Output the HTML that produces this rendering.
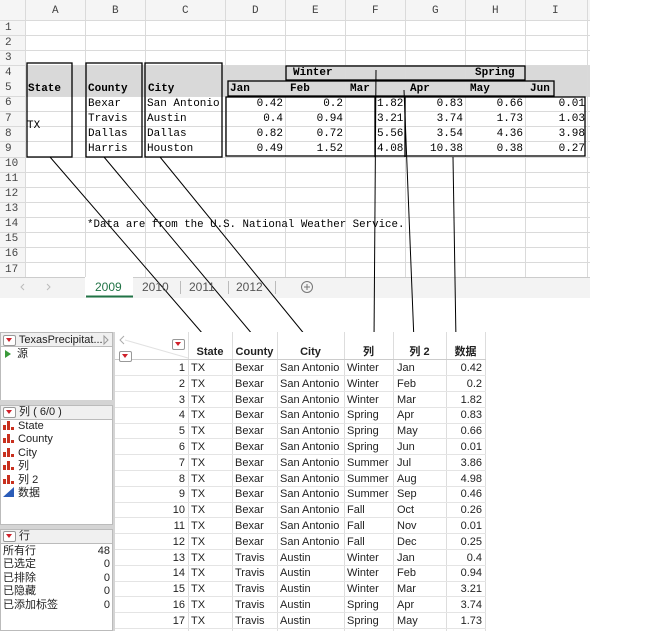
<!DOCTYPE html>
<html><head><meta charset="utf-8"><style>
body{margin:0;width:667px;height:631px;background:#fff;position:relative;overflow:hidden}
.a{position:absolute;white-space:nowrap}
.m{font-family:"Liberation Mono","Noto Sans CJK SC",monospace;font-size:11px;color:#000;line-height:14px}
.s{font-family:"Liberation Sans","Noto Sans CJK SC",sans-serif;font-size:11px;color:#222;line-height:14px}
.tri{display:inline-block;width:11px;height:9px;background:#fff;border:1px solid #999;border-radius:2px;position:relative;vertical-align:middle}
.tri:after{content:"";position:absolute;left:2px;top:2px;border-left:3.5px solid transparent;border-right:3.5px solid transparent;border-top:4px solid #d0202a}
.it{height:13.4px;line-height:13.4px}
.it svg{vertical-align:-1px}
</style></head><body>
<svg class="a" style="left:0;top:0" width="667" height="631">
<rect x="0" y="0" width="590" height="277" fill="#fff"/>
<rect x="0" y="0" width="590" height="20" fill="#f5f5f5"/>
<rect x="0" y="0" width="25" height="277" fill="#f5f5f5"/>
<rect x="25" y="65" width="565" height="31" fill="#d9d9d9"/>
<g stroke="#dadada" stroke-width="1">
<line x1="25.5" y1="0" x2="25.5" y2="277"/><line x1="85.5" y1="0" x2="85.5" y2="277"/><line x1="145.5" y1="0" x2="145.5" y2="277"/><line x1="225.5" y1="0" x2="225.5" y2="277"/><line x1="285.5" y1="0" x2="285.5" y2="277"/><line x1="345.5" y1="0" x2="345.5" y2="277"/><line x1="405.5" y1="0" x2="405.5" y2="277"/><line x1="465.5" y1="0" x2="465.5" y2="277"/><line x1="525.5" y1="0" x2="525.5" y2="277"/><line x1="587.5" y1="0" x2="587.5" y2="277"/>
<line x1="0" y1="20.5" x2="590" y2="20.5"/><line x1="0" y1="35.5" x2="590" y2="35.5"/><line x1="0" y1="50.5" x2="590" y2="50.5"/><line x1="0" y1="65.5" x2="590" y2="65.5"/><line x1="0" y1="96.5" x2="590" y2="96.5"/><line x1="0" y1="111.5" x2="590" y2="111.5"/><line x1="0" y1="126.5" x2="590" y2="126.5"/><line x1="0" y1="141.5" x2="590" y2="141.5"/><line x1="0" y1="157.5" x2="590" y2="157.5"/><line x1="0" y1="172.5" x2="590" y2="172.5"/><line x1="0" y1="187.5" x2="590" y2="187.5"/><line x1="0" y1="202.5" x2="590" y2="202.5"/><line x1="0" y1="217.5" x2="590" y2="217.5"/><line x1="0" y1="232.5" x2="590" y2="232.5"/><line x1="0" y1="247.5" x2="590" y2="247.5"/><line x1="0" y1="262.5" x2="590" y2="262.5"/>
</g>
<rect x="0" y="277" width="590" height="21" fill="#f3f3f3"/>
<line x1="0" y1="277.5" x2="590" y2="277.5" stroke="#ccc"/>
<rect x="85" y="277" width="48" height="20" fill="#fff"/>
<line x1="86" y1="296.5" x2="133" y2="296.5" stroke="#217346" stroke-width="2"/>
<g stroke="#bbb"><line x1="180.5" y1="281" x2="180.5" y2="294"/><line x1="228.5" y1="281" x2="228.5" y2="294"/><line x1="275.5" y1="281" x2="275.5" y2="294"/></g>
<circle cx="307" cy="287" r="5.5" fill="none" stroke="#777"/>
<path d="M304 287h6M307 284v6" stroke="#777"/>
<path d="M24 284l-3 3 3 3M47 284l3 3-3 3" fill="none" stroke="#bbb"/>
<g fill="none" stroke="#000" stroke-width="1.3">
<rect x="27" y="63" width="45" height="94"/>
<rect x="86" y="63" width="56" height="94"/>
<rect x="145" y="63" width="77" height="94"/>
<rect x="226" y="97" width="359" height="59"/>
<rect x="286" y="66" width="239" height="14"/>
<rect x="228" y="81" width="326" height="15"/>
<line x1="375" y1="97" x2="375" y2="157"/>
<line x1="405" y1="97" x2="405" y2="157"/>
</g>
<g stroke="#000" stroke-width="1">
<line x1="50" y1="157" x2="209" y2="341"/>
<line x1="104" y1="157" x2="258" y2="341"/>
<line x1="160" y1="157" x2="310" y2="341"/>
<line x1="376" y1="70" x2="374" y2="341"/>
<line x1="404" y1="90" x2="414" y2="341"/>
<line x1="453" y1="157" x2="456" y2="341"/>
</g>
<rect x="0" y="332" width="113" height="299" fill="#fff"/>
<rect x="0.5" y="332.5" width="112" height="14" fill="#f0f0f0" stroke="#bbb"/>
<rect x="0.5" y="346.5" width="112" height="54" fill="#fff" stroke="#bbb"/>
<rect x="0" y="400" width="113" height="5" fill="#d4d4d4"/>
<rect x="0.5" y="405.5" width="112" height="14" fill="#f0f0f0" stroke="#bbb"/>
<rect x="0.5" y="419.5" width="112" height="105" fill="#fff" stroke="#bbb"/>
<rect x="0" y="525" width="113" height="4" fill="#d4d4d4"/>
<rect x="0.5" y="529.5" width="112" height="14" fill="#f0f0f0" stroke="#bbb"/>
<rect x="0.5" y="543.5" width="112" height="87" fill="#fff" stroke="#bbb"/>
<rect x="113" y="332" width="2" height="299" fill="#d4d4d4"/>
<path d="M5 350l6 4-6 4z" fill="#3a9a3a"/>
<path d="M104 336l4 4-4 4z" fill="none" stroke="#999"/>
<rect x="115" y="332" width="371" height="28" fill="#fff"/>
<g stroke="#ddd">
<line x1="188.5" y1="332" x2="188.5" y2="631"/><line x1="232.5" y1="332" x2="232.5" y2="631"/><line x1="277.5" y1="332" x2="277.5" y2="631"/><line x1="344.5" y1="332" x2="344.5" y2="631"/><line x1="393.5" y1="332" x2="393.5" y2="631"/><line x1="446.5" y1="332" x2="446.5" y2="631"/><line x1="485.5" y1="332" x2="485.5" y2="631"/>
<line x1="115" y1="359.5" x2="486" y2="359.5" stroke="#ccc"/>
<line x1="125" y1="340" x2="188" y2="358" stroke="#e2e2e2"/>
</g>
<path d="M124 336l-4 4 4 4" fill="none" stroke="#aaa"/>
</svg>
<div class="a m" style="top:4px;left:52px;color:#444">A</div>
<div class="a m" style="top:4px;left:112px;color:#444">B</div>
<div class="a m" style="top:4px;left:182px;color:#444">C</div>
<div class="a m" style="top:4px;left:252px;color:#444">D</div>
<div class="a m" style="top:4px;left:312px;color:#444">E</div>
<div class="a m" style="top:4px;left:372px;color:#444">F</div>
<div class="a m" style="top:4px;left:432px;color:#444">G</div>
<div class="a m" style="top:4px;left:492px;color:#444">H</div>
<div class="a m" style="top:4px;left:552px;color:#444">I</div>
<div class="a m" style="top:21px;left:5px;line-height:15.1px;color:#444;white-space:pre">1
2
3
4
5
6
7
8
9
10
11
12
13
14
15
16
17</div>
<div class="a m" style="top:82px;left:28px;font-weight:bold">State</div>
<div class="a m" style="top:82px;left:88px;font-weight:bold">County</div>
<div class="a m" style="top:82px;left:148px;font-weight:bold">City</div>
<div class="a m" style="top:66px;left:293px;font-weight:bold">Winter</div>
<div class="a m" style="top:66px;left:475px;font-weight:bold">Spring</div>
<div class="a m" style="top:82px;left:230px;font-weight:bold">Jan</div>
<div class="a m" style="top:82px;left:290px;font-weight:bold">Feb</div>
<div class="a m" style="top:82px;left:350px;font-weight:bold">Mar</div>
<div class="a m" style="top:82px;left:410px;font-weight:bold">Apr</div>
<div class="a m" style="top:82px;left:470px;font-weight:bold">May</div>
<div class="a m" style="top:82px;left:530px;font-weight:bold">Jun</div>
<div class="a m" style="top:119px;left:27px">TX</div>
<div class="a m" style="top:97px;left:88px;line-height:15px;white-space:pre">Bexar
Travis
Dallas
Harris</div>
<div class="a m" style="top:97px;left:147px;line-height:15px;white-space:pre">San Antonio
Austin
Dallas
Houston</div>
<div class="a m" style="top:97px;left:226px;width:57px;text-align:right;line-height:15px;white-space:pre">0.42
0.4
0.82
0.49</div>
<div class="a m" style="top:97px;left:286px;width:57px;text-align:right;line-height:15px;white-space:pre">0.2
0.94
0.72
1.52</div>
<div class="a m" style="top:97px;left:377px;line-height:15px;white-space:pre">1.82
3.21
5.56
4.08</div>
<div class="a m" style="top:97px;left:406px;width:57px;text-align:right;line-height:15px;white-space:pre">0.83
3.74
3.54
10.38</div>
<div class="a m" style="top:97px;left:466px;width:57px;text-align:right;line-height:15px;white-space:pre">0.66
1.73
4.36
0.38</div>
<div class="a m" style="top:97px;left:526px;width:59px;text-align:right;line-height:15px;white-space:pre">0.01
1.03
3.98
0.27</div>
<div class="a m" style="top:218px;left:87px;font-size:10.8px">*Data are from the U.S. National Weather Service.</div>
<div class="a s" style="top:280px;left:95px;font-size:12px;color:#217346">2009</div>
<div class="a s" style="top:280px;left:142px;font-size:12px;color:#555">2010</div>
<div class="a s" style="top:280px;left:189px;font-size:12px;color:#555">2011</div>
<div class="a s" style="top:280px;left:236px;font-size:12px;color:#555">2012</div>
<div class="a s" style="top:333px;left:3px"><span class="tri"></span> TexasPrecipitat...</div>
<div class="a s" style="top:347px;left:17px">源</div>
<div class="a s" style="top:405px;left:3px"><span class="tri"></span> 列 ( 6/0 )</div>
<div class="a s" style="top:420px;left:3px">
<div class="it"><svg width="12" height="10"><rect x="0" y="5" width="3" height="5" fill="#c8301e"/><rect x="4" y="1" width="3" height="9" fill="#c8301e"/><rect x="8" y="7" width="3" height="3" fill="#c8301e"/></svg> State</div>
<div class="it"><svg width="12" height="10"><rect x="0" y="5" width="3" height="5" fill="#c8301e"/><rect x="4" y="1" width="3" height="9" fill="#c8301e"/><rect x="8" y="7" width="3" height="3" fill="#c8301e"/></svg> County</div>
<div class="it"><svg width="12" height="10"><rect x="0" y="5" width="3" height="5" fill="#c8301e"/><rect x="4" y="1" width="3" height="9" fill="#c8301e"/><rect x="8" y="7" width="3" height="3" fill="#c8301e"/></svg> City</div>
<div class="it"><svg width="12" height="10"><rect x="0" y="5" width="3" height="5" fill="#c8301e"/><rect x="4" y="1" width="3" height="9" fill="#c8301e"/><rect x="8" y="7" width="3" height="3" fill="#c8301e"/></svg> 列</div>
<div class="it"><svg width="12" height="10"><rect x="0" y="5" width="3" height="5" fill="#c8301e"/><rect x="4" y="1" width="3" height="9" fill="#c8301e"/><rect x="8" y="7" width="3" height="3" fill="#c8301e"/></svg> 列 2</div>
<div class="it"><svg width="12" height="10"><path d="M0 10L11 0V10Z" fill="#2a5cb8"/></svg> 数据</div>
</div>
<div class="a s" style="top:529px;left:3px"><span class="tri"></span> 行</div>
<div class="a s" style="top:545px;left:3px;line-height:13.4px;white-space:pre">所有行
已选定
已排除
已隐藏
已添加标签</div>
<div class="a s" style="top:545px;left:80px;width:30px;text-align:right;line-height:13.4px;white-space:pre">48
0
0
0
0</div>
<div class="a" style="top:335px;left:172px"><span class="tri"></span></div>
<div class="a" style="top:347px;left:119px"><span class="tri"></span></div>
<div class="a s" style="top:345px;left:188px;width:44px;text-align:center;font-weight:bold">State</div>
<div class="a s" style="top:345px;left:232px;width:45px;text-align:center;font-weight:bold">County</div>
<div class="a s" style="top:345px;left:277px;width:67px;text-align:center;font-weight:bold">City</div>
<div class="a s" style="top:345px;left:344px;width:49px;text-align:center;font-weight:bold">列</div>
<div class="a s" style="top:345px;left:393px;width:53px;text-align:center;font-weight:bold">列 2</div>
<div class="a s" style="top:345px;left:446px;width:39px;text-align:center;font-weight:bold">数据</div>
<div class="a" style="top:360px;left:115px;width:371px">
<svg width="371" height="271" style="position:absolute;left:0;top:0"><g stroke="#e4e4e4">
<line x1="0" y1="15.5" x2="371" y2="15.5"/><line x1="0" y1="31.5" x2="371" y2="31.5"/><line x1="0" y1="47.5" x2="371" y2="47.5"/><line x1="0" y1="63.5" x2="371" y2="63.5"/><line x1="0" y1="78.5" x2="371" y2="78.5"/><line x1="0" y1="94.5" x2="371" y2="94.5"/><line x1="0" y1="110.5" x2="371" y2="110.5"/><line x1="0" y1="126.5" x2="371" y2="126.5"/><line x1="0" y1="142.5" x2="371" y2="142.5"/><line x1="0" y1="157.5" x2="371" y2="157.5"/><line x1="0" y1="173.5" x2="371" y2="173.5"/><line x1="0" y1="189.5" x2="371" y2="189.5"/><line x1="0" y1="205.5" x2="371" y2="205.5"/><line x1="0" y1="221.5" x2="371" y2="221.5"/><line x1="0" y1="236.5" x2="371" y2="236.5"/><line x1="0" y1="252.5" x2="371" y2="252.5"/><line x1="0" y1="268.5" x2="371" y2="268.5"/></g></svg>
<div class="a s" style="top:1px;left:0;width:70px;text-align:right;line-height:15.8px;white-space:pre">1
2
3
4
5
6
7
8
9
10
11
12
13
14
15
16
17</div>
<div class="a s" style="top:1px;left:76px;line-height:15.8px;white-space:pre">TX
TX
TX
TX
TX
TX
TX
TX
TX
TX
TX
TX
TX
TX
TX
TX
TX</div>
<div class="a s" style="top:1px;left:120px;line-height:15.8px;white-space:pre">Bexar
Bexar
Bexar
Bexar
Bexar
Bexar
Bexar
Bexar
Bexar
Bexar
Bexar
Bexar
Travis
Travis
Travis
Travis
Travis</div>
<div class="a s" style="top:1px;left:165px;line-height:15.8px;white-space:pre">San Antonio
San Antonio
San Antonio
San Antonio
San Antonio
San Antonio
San Antonio
San Antonio
San Antonio
San Antonio
San Antonio
San Antonio
Austin
Austin
Austin
Austin
Austin</div>
<div class="a s" style="top:1px;left:232px;line-height:15.8px;white-space:pre">Winter
Winter
Winter
Spring
Spring
Spring
Summer
Summer
Summer
Fall
Fall
Fall
Winter
Winter
Winter
Spring
Spring</div>
<div class="a s" style="top:1px;left:282px;line-height:15.8px;white-space:pre">Jan
Feb
Mar
Apr
May
Jun
Jul
Aug
Sep
Oct
Nov
Dec
Jan
Feb
Mar
Apr
May</div>
<div class="a s" style="top:1px;left:331px;width:36px;text-align:right;line-height:15.8px;white-space:pre">0.42
0.2
1.82
0.83
0.66
0.01
3.86
4.98
0.46
0.26
0.01
0.25
0.4
0.94
3.21
3.74
1.73</div>
</div>
</body></html>
